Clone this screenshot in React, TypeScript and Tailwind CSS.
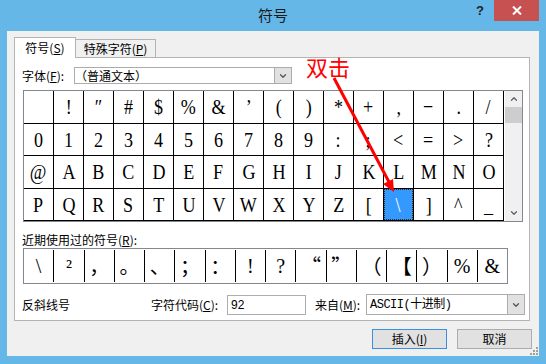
import { ChevronDown, ChevronUp } from 'lucide-react'

const GRID = [
  ' ', '!', '″', '#', '$', '%', '&', '’', '(', ')', '*', '+', ',', '−', '.', '/',
  '0', '1', '2', '3', '4', '5', '6', '7', '8', '9', ':', ';', '<', '=', '>', '?',
  '@', 'A', 'B', 'C', 'D', 'E', 'F', 'G', 'H', 'I', 'J', 'K', 'L', 'M', 'N', 'O',
  'P', 'Q', 'R', 'S', 'T', 'U', 'V', 'W', 'X', 'Y', 'Z', '[', '\\', ']', '^', '_',
]

// recent symbols: cjk ones use the CJK font
const RECENT: { ch: string; cjk?: boolean }[] = [
  { ch: '\\' }, { ch: '²' }, { ch: '，', cjk: true }, { ch: '。', cjk: true },
  { ch: '、', cjk: true }, { ch: '；', cjk: true }, { ch: '：', cjk: true }, { ch: '!' },
  { ch: '?' }, { ch: '“', cjk: true }, { ch: '”', cjk: true }, { ch: '（', cjk: true },
  { ch: '【', cjk: true }, { ch: '）', cjk: true }, { ch: '%' }, { ch: '&' },
]

const SELECTED = 60

function DropBtn() {
  return (
    <div className="w-[17px] h-full border-l border-[#acacac] bg-[#e1e1e1] flex items-center justify-center">
      <ChevronDown size={10} strokeWidth={3} className="text-[#555]" />
    </div>
  )
}

export default function App() {
  return (
    <div className="relative w-[546px] h-[364px] bg-[#65b7e8] flex flex-col overflow-hidden font-['Noto_Sans_CJK_SC','Noto_Sans',sans-serif] text-[12px] text-black">
      {/* title bar */}
      <div className="h-[31px] flex shrink-0">
        <div className="flex-1" />
        <div className="pt-[5px] text-[15px] leading-[20px] text-[#1b1b1b]">符号</div>
        <div className="flex-1 flex justify-end items-start">
          <span className="mt-[3px] mr-[10px] text-[13px] leading-[16px] font-bold text-[#222] font-['Liberation_Sans',sans-serif]">?</span>
          <div className="w-[45px] h-[21px] mr-[7px] bg-[#c75050] flex items-center justify-center">
            <svg width="10" height="9" viewBox="0 0 10 9">
              <path d="M1 0.5 L9 8.5 M9 0.5 L1 8.5" stroke="#fff" strokeWidth="2" />
            </svg>
          </div>
        </div>
      </div>

      {/* dialog body */}
      <div className="relative mx-[7px] h-[325px] bg-[#f0f0f0] flex flex-col">
        {/* tabs */}
        <div className="h-[26px] flex items-end pl-[7px] leading-[18px]">
          <div className="relative z-10 w-[62px] h-[21px] -mb-px pt-[1px] text-center border border-b-0 border-[#b4b4b4] bg-white">
            符号(<u>S</u>)
          </div>
          <div className="w-[80px] h-[18px] text-center border border-l-0 border-b-0 border-[#b4b4b4] bg-[#f0f0f0]">
            特殊字符(<u>P</u>)
          </div>
        </div>

        {/* tab panel */}
        <div className="ml-[7px] w-[516px] h-[264px] border border-[#b4b4b4] bg-white flex flex-col pl-[7px]">
          <div className="mt-[9px] h-[17px] flex items-center">
            <span className="w-[52px]">字体(<u>F</u>):</span>
            <div className="w-[218px] h-[17px] border border-[#acacac] bg-white flex items-center">
              <span className="flex-1 leading-[15px]">（普通文本）</span>
              <DropBtn />
            </div>
          </div>

          {/* symbol grid */}
          <div className="mt-[6px] ml-px w-[500px] h-[132px] border border-[#828790] flex">
            <div className="w-[480px] h-full grid grid-cols-[repeat(16,minmax(0,1fr))] grid-rows-[repeat(4,minmax(0,1fr))] gap-px bg-black border-r border-b border-black">
              {GRID.map((ch, i) => (
                <div
                  key={i}
                  className={
                    i === SELECTED
                      ? 'bg-[#3399ff] border border-dotted border-[#3a2a10] text-white flex items-center justify-center font-["Liberation_Serif",serif] text-[22px]'
                      : 'bg-white flex items-center justify-center font-["Liberation_Serif",serif] text-[22px]'
                  }
                >
                  <span className="inline-block scale-x-[0.82]">{ch}</span>
                </div>
              ))}
            </div>
            <div className="ml-px w-[17px] h-full bg-[#f0f0f0] flex flex-col">
              <div className="h-[16px] flex items-center justify-center">
                <ChevronUp size={10} strokeWidth={3} className="text-[#606060]" />
              </div>
              <div className="h-[16px] bg-[#cdcdcd]" />
              <div className="flex-1" />
              <div className="h-[17px] flex items-center justify-center">
                <ChevronDown size={10} strokeWidth={3} className="text-[#606060]" />
              </div>
            </div>
          </div>

          <div className="mt-[10px] h-[16px] leading-[16px]">近期使用过的符号(<u>R</u>):</div>
          <div className="ml-px w-[485px] h-[36px] border border-[#828790] flex py-px bg-white">
            {RECENT.map((r, i) => (
              <div
                key={i}
                className={`flex-1 flex items-center justify-center text-[20px] ${i > 0 ? 'border-l border-black' : ''} ${r.cjk ? "font-['Noto_Sans_CJK_SC',sans-serif]" : "font-['Liberation_Serif',serif]"}`}
              >
                {r.ch}
              </div>
            ))}
          </div>

          <div className="mt-[10px] h-[21px] flex items-center">
            <span className="w-[129px]">反斜线号</span>
            <span className="w-[76px]">字符代码(<u>C</u>):</span>
            <div className="w-[79px] h-[20px] border border-[#abadb3] bg-white flex items-center pl-[3px] font-['Liberation_Sans',sans-serif]">
              92
            </div>
            <span className="ml-[9px] w-[51px]">来自(<u>M</u>):</span>
            <div className="w-[159px] h-[21px] border border-[#acacac] bg-white flex items-center">
              <span className="flex-1 pl-[3px] font-['Liberation_Mono','Noto_Sans_CJK_SC',monospace] tracking-[-0.5px]">
                ASCII(十进制)
              </span>
              <DropBtn />
            </div>
          </div>
        </div>

        {/* buttons */}
        <div className="mt-[8px] flex justify-end gap-[10px] pr-[7px]">
          <div className="w-[75px] h-[20px] border border-[#3c8fdc] bg-[#e1e1e1] flex items-center justify-center">
            插入(<u>I</u>)
          </div>
          <div className="w-[75px] h-[20px] border border-[#acacac] bg-[#e1e1e1] flex items-center justify-center">
            取消
          </div>
        </div>

        {/* resize grip */}
        <svg className="absolute right-[1px] bottom-[1px]" width="10" height="10" viewBox="0 0 10 10">
          {[[8, 2], [8, 5], [5, 5], [8, 8], [5, 8], [2, 8]].map(([x, y], i) => (
            <rect key={i} x={x} y={y} width="2" height="2" fill="#a0a0a0" />
          ))}
        </svg>
      </div>

      {/* red annotation */}
      <span className="absolute left-[306px] top-[55px] text-[22px] leading-none text-[#ff0000]">双击</span>
      <svg className="absolute left-0 top-0 pointer-events-none" width="546" height="364">
        <line x1="334" y1="78" x2="389" y2="182" stroke="#ff0000" strokeWidth="3" />
        <polygon points="394,192 393,179 383,184" fill="#ff0000" />
      </svg>
    </div>
  )
}
